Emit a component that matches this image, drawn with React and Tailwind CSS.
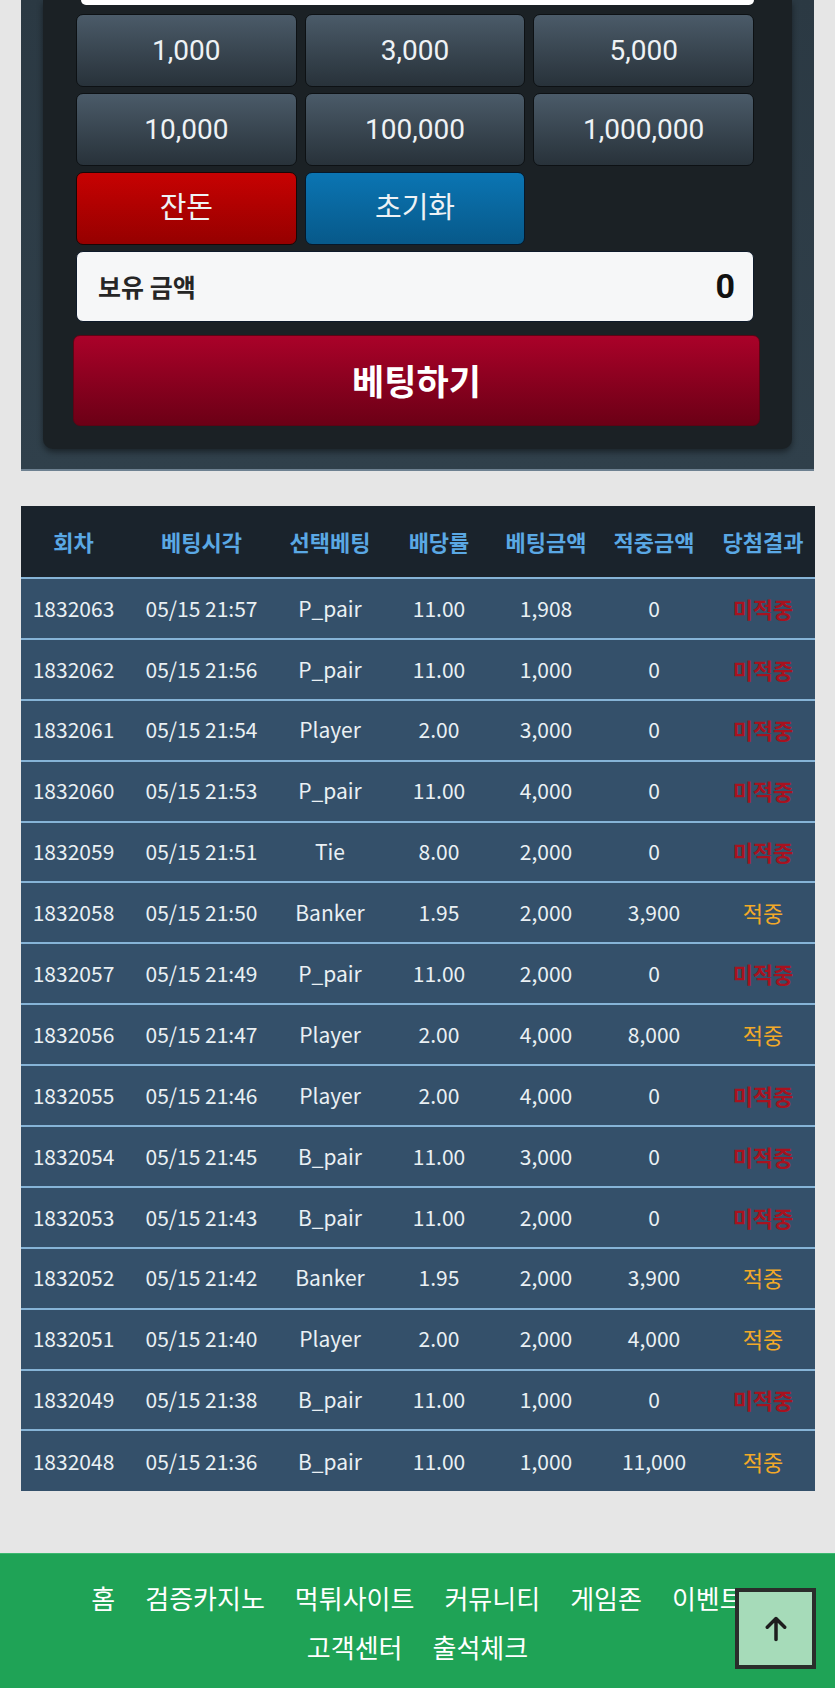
import React from "react";

const rows = [
  ["1832063", "05/15 21:57", "P_pair", "11.00", "1,908", "0", false],
  ["1832062", "05/15 21:56", "P_pair", "11.00", "1,000", "0", false],
  ["1832061", "05/15 21:54", "Player", "2.00", "3,000", "0", false],
  ["1832060", "05/15 21:53", "P_pair", "11.00", "4,000", "0", false],
  ["1832059", "05/15 21:51", "Tie", "8.00", "2,000", "0", false],
  ["1832058", "05/15 21:50", "Banker", "1.95", "2,000", "3,900", true],
  ["1832057", "05/15 21:49", "P_pair", "11.00", "2,000", "0", false],
  ["1832056", "05/15 21:47", "Player", "2.00", "4,000", "8,000", true],
  ["1832055", "05/15 21:46", "Player", "2.00", "4,000", "0", false],
  ["1832054", "05/15 21:45", "B_pair", "11.00", "3,000", "0", false],
  ["1832053", "05/15 21:43", "B_pair", "11.00", "2,000", "0", false],
  ["1832052", "05/15 21:42", "Banker", "1.95", "2,000", "3,900", true],
  ["1832051", "05/15 21:40", "Player", "2.00", "2,000", "4,000", true],
  ["1832049", "05/15 21:38", "B_pair", "11.00", "1,000", "0", false],
  ["1832048", "05/15 21:36", "B_pair", "11.00", "1,000", "11,000", true],
];

const amounts = ["1,000", "3,000", "5,000", "10,000", "100,000", "1,000,000"];

const headers = ["회차", "베팅시각", "선택베팅", "배당률", "베팅금액", "적중금액", "당첨결과"];

const menu = ["홈", "검증카지노", "먹튀사이트", "커뮤니티", "게임존", "이벤트", "고객센터", "출석체크"];

export default function App() {
  return (
    <div className="relative min-h-screen bg-[#e6e6e6] font-['Noto_Sans_CJK_KR',sans-serif]">

      {/* Betting panel */}

      <div className="mx-[21px] border-b-2 border-[#6e8191] bg-gradient-to-b from-[#2b3943] to-[#30404b] px-[22px] pb-[20px]">
        <div className="rounded-b-[10px] bg-[#1b2125] pb-[23px] pl-[33px] pr-[38px] shadow-[0_3px_6px_rgba(0,0,0,0.45)]">

          <div className="ml-[5px] h-[5px] rounded-b-[6px] bg-white" />

          <div className="mt-[9px] grid grid-cols-3 gap-x-[8px] gap-y-[6px] font-['Roboto','Noto_Sans_CJK_KR',sans-serif] text-[28px] text-[#eef2f5]">
            {amounts.map((a) => (
              <button
                key={a}
                className="flex h-[73px] items-center justify-center rounded-[7px] border border-[#0d1114] bg-gradient-to-b from-[#4b5b69] to-[#28323a]"
              >
                {a}
              </button>
            ))}
            <button className="flex h-[73px] items-center justify-center rounded-[7px] border border-[#1a0606] bg-gradient-to-b from-[#c70202] to-[#960000] text-[29px]">
              잔돈
            </button>
            <button className="flex h-[73px] items-center justify-center rounded-[7px] border border-[#06182a] bg-gradient-to-b from-[#0b75b3] to-[#07598a] text-[29px]">
              초기화
            </button>
          </div>

          <div className="mt-[6px] flex h-[71px] items-center justify-between rounded-[7px] border border-[#0e1a2a] bg-[#f6f7f8] pl-[21px] pr-[18px]">
            <span className="text-[25px] font-bold text-[#262626]">보유 금액</span>
            <span className="font-['Roboto',sans-serif] text-[34px] font-bold text-[#111]">0</span>
          </div>

          <button className="-ml-[3px] mt-[13px] flex h-[91px] w-[calc(100%+9px)] items-center justify-center rounded-[7px] border border-[#5c0414] bg-gradient-to-b from-[#aa0229] to-[#6c0016] text-[35px] font-bold text-white">
            베팅하기
          </button>

        </div>
      </div>

      {/* Bet history */}

      <div className="mx-[21px] mt-[35px]">
        <table className="w-full table-fixed border-collapse text-center">
          <colgroup>
            <col className="w-[105px]" />
            <col className="w-[151px]" />
            <col className="w-[106px]" />
            <col className="w-[112px]" />
            <col className="w-[102px]" />
            <col className="w-[114px]" />
            <col className="w-[104px]" />
          </colgroup>
          <thead>
            <tr className="h-[72px] bg-[#1a232c]">
              {headers.map((h) => (
                <th key={h} className="p-0 text-[22px] font-bold text-[#5aa8e4]">
                  {h}
                </th>
              ))}
            </tr>
          </thead>
          <tbody className="text-[21px] text-[#eaf0f4]">
            {rows.map((r) => (
              <tr key={r[0]} className="h-[60.9px] border-t-2 border-[#86b4d7] bg-[#34506a]">
                <td className="p-0">{r[0]}</td>
                <td className="p-0">{r[1]}</td>
                <td className="p-0">{r[2]}</td>
                <td className="p-0">{r[3]}</td>
                <td className="p-0">{r[4]}</td>
                <td className="p-0">{r[5]}</td>
                <td className="p-0">
                  {r[6] ? (
                    <span className="text-[22px] text-[#f2a928]">적중</span>
                  ) : (
                    <span className="text-[22px] font-bold text-[#a8121f]">미적중</span>
                  )}
                </td>
              </tr>
            ))}
          </tbody>
        </table>
      </div>

      {/* Footer */}

      <footer className="mt-[62px] h-[135px] border-t border-[#3cb870] bg-[#1fa356] pt-[27px]">
        <ul className="mx-auto flex max-w-[720px] flex-wrap justify-center gap-x-[30px] gap-y-[16px] text-[26px] leading-[33px] text-white">
          {menu.map((m) => (
            <li key={m}>{m}</li>
          ))}
        </ul>
      </footer>

      <button className="fixed bottom-[19px] right-[19px] flex h-[81px] w-[81px] items-center justify-center border-[4px] border-[#2a2d2b] bg-[#a6dbb9]">
        <svg viewBox="0 0 384 512" className="h-[28px] w-[28px]" fill="#1e1e1e">
          <path d="M214.6 41.4c-12.5-12.5-32.8-12.5-45.3 0l-160 160c-12.5 12.5-12.5 32.8 0 45.3s32.8 12.5 45.3 0L160 141.2V448c0 17.7 14.3 32 32 32s32-14.3 32-32V141.2L329.4 246.6c12.5 12.5 32.8 12.5 45.3 0s12.5-32.8 0-45.3l-160-160z" />
        </svg>
      </button>

    </div>
  );
}
